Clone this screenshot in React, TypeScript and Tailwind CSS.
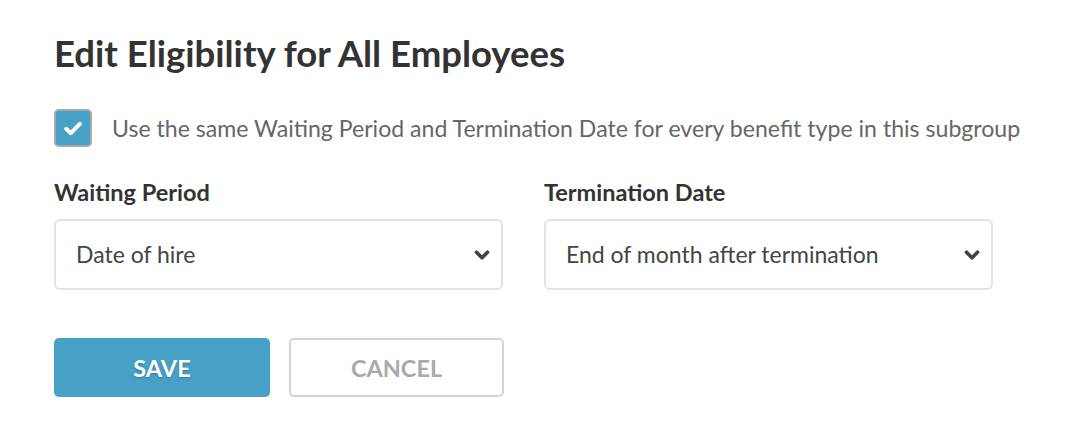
import { ChevronDown } from 'lucide-react'

function SelectBox({ value }: { value: string }) {
    return (
        <div className="h-[71px] border-2 border-[#e3e3e3] rounded-[6px] flex items-center justify-between pl-[20px] pr-[8px] bg-white">
            <span className="text-[23px] text-[#444]">{value}</span>
            <ChevronDown className="w-[22px] h-[22px] text-[#444]" strokeWidth={4} />
        </div>
    )
}

export default function App() {
    return (
        <div className="min-h-screen bg-white font-['Lato',sans-serif] pl-[54px] pt-[33px]">
            <h1 className="text-[36.5px] font-bold text-[#333] leading-[40px]">Edit Eligibility for All Employees</h1>

            <div className="flex items-center gap-[20px] mt-[36px]">
                <div className="w-[38px] h-[38px] rounded-[5px] bg-[#47a0c5] border-2 border-[#a9a9a9] flex items-center justify-center">
                    <svg viewBox="0 0 16 16" className="w-[22px] h-[22px]">
                        <path d="M3 8.6 L6.4 11.8 L13 5" fill="none" stroke="white" strokeWidth="2.9" strokeLinecap="round" strokeLinejoin="round" />
                    </svg>
                </div>
                <span className="text-[23.1px] text-[#666] leading-[38px]">Use the same Waiting Period and Termination Date for every benefit type in this subgroup</span>
            </div>

            <div className="grid grid-cols-[449px_449px] gap-x-[41px] mt-[32px]">
                <div>
                    <div className="text-[23.5px] font-bold text-[#333] leading-[26px]">Waiting Period</div>
                    <div className="mt-[14px]">
                        <SelectBox value="Date of hire" />
                    </div>
                </div>
                <div>
                    <div className="text-[23.5px] font-bold text-[#333] leading-[26px]">Termination Date</div>
                    <div className="mt-[14px]">
                        <SelectBox value="End of month after termination" />
                    </div>
                </div>
            </div>

            <div className="flex gap-[19px] mt-[48px]">
                <button className="w-[216px] h-[59px] rounded-[5px] bg-[#47a0c5] text-white text-[23.5px] font-bold pt-[3px] [text-shadow:0_1px_2px_rgba(0,0,0,0.25)]">
                    SAVE
                </button>
                <button className="w-[215px] h-[59px] rounded-[5px] border-2 border-[#d3d3d3] bg-white text-[#aaa] text-[23.5px] font-bold pt-[3px]">
                    CANCEL
                </button>
            </div>
        </div>
    )
}
